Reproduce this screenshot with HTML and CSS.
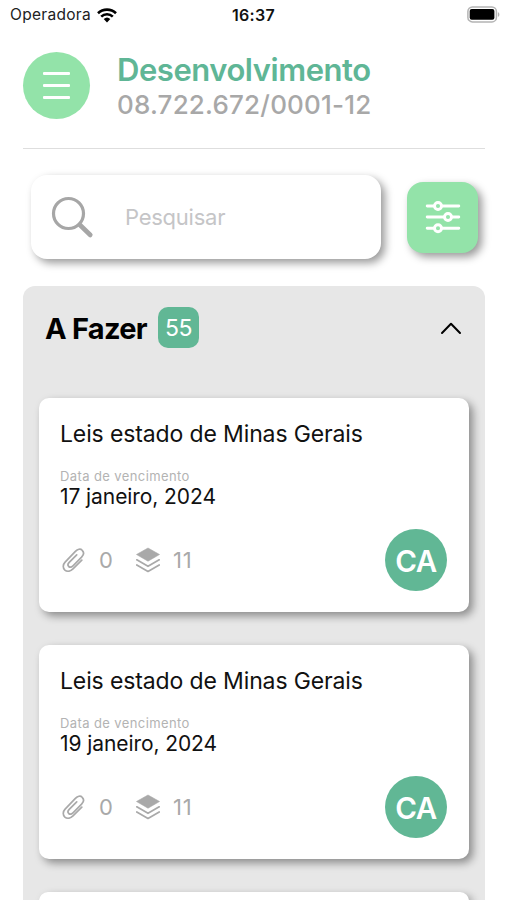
FILE: index.html
```html
<!DOCTYPE html>
<html lang="pt-BR">
<head>
<meta charset="utf-8">
<meta name="viewport" content="width=device-width">
<title>Desenvolvimento</title>
<link rel="stylesheet" href="styles.css">
</head>
<body>
<svg class="defs" aria-hidden="true">
  <symbol id="clip" viewBox="0 0 24 26">
    <path d="M20.800 13.200 12 21.900C9.800 24 6.300 25.200 3.900 23.100 1.500 20.900 1.900 17.500 4.100 15.200L14.400 4.400C16.500 2.200 19.400 1.300 21.200 3.300 23.200 5.300 22.600 8.100 20.600 10.200L12 18.800C10.600 20.200 8.900 20.600 7.700 19.500 6.500 18.300 6.900 16.700 8.200 15.300L15.700 7.800" fill="none" stroke="currentColor" stroke-width="1.700" stroke-linecap="round"/>
  </symbol>
  <symbol id="layers" viewBox="0 0 24 26">
    <path d="M12 1 23.500 7.500 12 14.200.5 7.500Z" fill="currentColor" stroke="currentColor" stroke-width=".6" stroke-linejoin="round"/>
    <path d="M.8 12.800 12 19.300 23.200 12.800M.8 18 12 24.500 23.200 18" fill="none" stroke="currentColor" stroke-width="1.700" stroke-linecap="round" stroke-linejoin="round"/>
  </symbol>
</svg>
<div class="status">
  <span class="carrier">Operadora</span>
  <svg class="wifi" viewBox="0 0 20 15"><g fill="none" stroke="#000" stroke-width="2.600"><path d="M1 5.200a13 13 0 0 1 18 0"/><path d="M4.200 8.600a8.300 8.300 0 0 1 11.600 0"/></g><path d="M6.700 11.100a4.800 4.800 0 0 1 6.600 0L10 14.500Z"/></svg>
  <span class="time">16:37</span>
  <svg class="battery" viewBox="0 0 33 17"><rect x=".9" y=".9" width="28.500" height="15" rx="4.500" fill="#fff" stroke="#b4b4b4" stroke-width="1.500"/><rect x="2.700" y="3" width="24.700" height="10.800" rx="2"/><path d="M30.900 6.200c2 .6 2 4 0 4.600Z" fill="#b4b4b4"/></svg>
</div>
<header class="header">
  <button class="menu" aria-label="Menu"><i></i><i></i><i></i></button>
  <div class="company">
    <h1>Desenvolvimento</h1>
    <p>08.722.672/0001-12</p>
  </div>
</header>
<div class="tools">
  <label class="search">
    <svg viewBox="0 0 44 44"><circle cx="18.500" cy="18.500" r="15" fill="none" stroke="#a6a6a6" stroke-width="3.200"/><path d="m30 30 10.300 10" stroke="#a6a6a6" stroke-width="4.600" stroke-linecap="round"/></svg>
    <span>Pesquisar</span>
  </label>
  <button class="filter" aria-label="Filtrar">
    <svg viewBox="0 0 36 34"><g fill="#93e3a9" stroke="#fff" stroke-width="2.900" stroke-linecap="round"><path d="M2.200 6h31.600M2.200 17h31.600M2.200 28.200h31.600"/><circle cx="13" cy="6" r="3.500"/><circle cx="23" cy="17" r="3.500"/><circle cx="13" cy="28.200" r="3.500"/></g></svg>
  </button>
</div>
<main class="panel">
  <div class="panel-head">
    <h2>A Fazer</h2>
    <span class="count">55</span>
    <svg class="chevron" viewBox="0 0 22 14"><path d="m2 12 9-9.200L20 12" fill="none" stroke="#000" stroke-width="2" stroke-linecap="round" stroke-linejoin="round"/></svg>
  </div>
  <article class="card">
    <h3>Leis estado de Minas Gerais</h3>
    <p class="label">Data de vencimento</p>
    <p class="date">17 janeiro, 2024</p>
    <div class="meta">
      <svg class="clip"><use href="#clip"/></svg><span class="files">0</span>
      <svg class="layers"><use href="#layers"/></svg><span class="steps">11</span>
      <span class="avatar">CA</span>
    </div>
  </article>
  <article class="card">
    <h3>Leis estado de Minas Gerais</h3>
    <p class="label">Data de vencimento</p>
    <p class="date">19 janeiro, 2024</p>
    <div class="meta">
      <svg class="clip"><use href="#clip"/></svg><span class="files">0</span>
      <svg class="layers"><use href="#layers"/></svg><span class="steps">11</span>
      <span class="avatar">CA</span>
    </div>
  </article>
  <article class="card card-next"></article>
</main>
</body>
</html>
```
FILE: styles.css
```css
* { box-sizing: border-box; margin: 0; padding: 0; }
html, body { height: 900px; overflow: hidden; }
body { background: #fff; color: #111; font-family: Inter, "Liberation Sans", sans-serif; }
button { border: 0; font: inherit; }
svg { display: block; flex: none; }
.defs { display: none; }

.status { height: 30px; display: grid; grid-template-columns: 87px 135px 1fr 33px; align-items: center; padding: 0 7px 0 10px; line-height: 20px; white-space: nowrap; }
.carrier { font-size: 15.500px; letter-spacing: .3px; color: #222; }
.wifi { width: 20px; height: 15px; }
.time { font-size: 16px; font-weight: 600; letter-spacing: .3px; }
.battery { width: 33px; height: 17px; margin-top: -2px; }

.header { height: 119px; margin: 0 22px 0 23px; padding-top: 22px; border-bottom: 1px solid #dedede; display: flex; gap: 27px; }
.menu { width: 67px; height: 67px; border-radius: 50%; background: #93e3a9; display: flex; flex-direction: column; justify-content: center; align-items: center; gap: 9px; }
.menu i { width: 27px; height: 3px; background: #fff; border-radius: 1px; }
.company { white-space: nowrap; }
.company h1 { font-size: 31px; font-weight: 600; line-height: 36px; letter-spacing: -.45px; color: #5fb696; }
.company p { font-size: 26px; font-weight: 500; line-height: 34px; letter-spacing: .2px; color: #a8a8a8; }

.tools { display: flex; align-items: center; gap: 26px; padding: 26px 0 0 31px; }
.search { width: 350px; height: 84px; border-radius: 16px; background: #fff; box-shadow: 4px 4px 8px rgba(0,0,0,.4); display: flex; align-items: center; gap: 31px; padding-left: 19px; }
.search svg { width: 44px; height: 44px; }
.search span { font-size: 22px; letter-spacing: -.25px; color: #c5c5c7; }
.filter { width: 71px; height: 71px; border-radius: 16px; background: #93e3a9; box-shadow: 4px 4px 8px rgba(0,0,0,.4); display: flex; justify-content: center; align-items: center; }
.filter svg { width: 36px; height: 34px; }

.panel { margin: 27px 22px 0 23px; height: 614px; padding: 0 16px; border-radius: 12px 12px 0 0; background: #e7e7e7; }
.panel-head { height: 112px; padding: 21px 7px 0 6px; display: flex; align-items: flex-start; }
.panel-head h2 { width: 113px; font-size: 29px; line-height: 43px; font-weight: 700; letter-spacing: -.75px; color: #000; white-space: nowrap; }
.count { width: 41px; height: 41px; border-radius: 10px; background: #61b795; color: #fff; font-size: 23px; line-height: 42px; letter-spacing: -.5px; text-align: center; }
.chevron { width: 22px; height: 14px; margin: 14px 0 0 auto; }

.card { height: 214px; margin-bottom: 33px; padding: 20px 22px; border-radius: 10px; background: #fff; box-shadow: 4px 4px 9px rgba(0,0,0,.4); white-space: nowrap; }
.card-next { height: 9px; margin: 0; padding: 0; border-radius: 10px 10px 0 0; }
.card h3 { font-size: 23px; line-height: 33px; font-weight: 400; letter-spacing: -.13px; margin-left: -1px; }
.label { margin: 17px 0 0 -1px; font-size: 13px; line-height: 17px; letter-spacing: .4px; color: #b3b3b3; }
.date { margin-left: -1px; font-size: 21px; line-height: 24px; letter-spacing: -.08px; }
.meta { display: flex; align-items: center; height: 62px; margin-top: 20px; color: #a9a9a9; font-size: 22px; }
.clip { width: 24px; height: 26px; }
.files { width: 37px; margin-left: 14px; }
.layers { width: 24px; height: 26px; }
.steps { margin-left: 13px; letter-spacing: .8px; }
.avatar { width: 62px; height: 62px; margin-left: auto; border-radius: 50%; background: #61b795; color: #fff; font-size: 29.500px; font-weight: 600; line-height: 64px; letter-spacing: -.5px; text-align: center; }
```
